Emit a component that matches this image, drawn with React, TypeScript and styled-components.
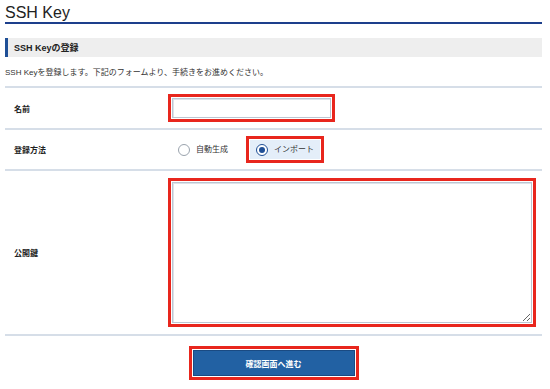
import React, { useState } from 'react';
import styled, { createGlobalStyle, css } from 'styled-components';

const GlobalStyle = createGlobalStyle`
  html, body {
    margin: 0;
    padding: 0;
    background: #ffffff;
  }
  body {
    font-family: 'Liberation Sans', 'Noto Sans CJK JP', sans-serif;
    color: #333333;
  }
`;

const Page = styled.div`
  width: 537px;
  padding: 0 8px 10px 5px;
`;

const Title = styled.h1`
  margin: 0;
  padding-top: 4px;
  font-size: 16px;
  line-height: 18px;
  font-weight: normal;
  color: #222222;
  border-bottom: 2px solid #1d3f8c;
`;

const SectionHeader = styled.h2`
  margin: 14px 0 0;
  height: 19px;
  padding-left: 6px;
  display: flex;
  align-items: center;
  background: #eeeeee;
  border-left: 3px solid #1f4f96;
  font-size: 9px;
  font-weight: bold;
  color: #222222;
`;

const Description = styled.p`
  margin: 10px 0 7px;
  font-size: 8px;
  line-height: 12px;
`;

const FormTable = styled.div`
  border-top: 2px solid #d6dee8;
`;

const Row = styled.div<{ $pad?: number }>`
  display: grid;
  grid-template-columns: 163px 1fr;
  align-items: center;
  padding: ${(p) => p.$pad ?? 6}px 6px ${(p) => p.$pad ?? 6}px 0;
  border-bottom: 2px solid #d6dee8;
`;

const Label = styled.label`
  padding-left: 9px;
  font-size: 8px;
  font-weight: bold;
  color: #222222;
`;

const Highlight = styled.div<{ $active?: boolean; $block?: boolean }>`
  display: ${(p) => (p.$block ? 'block' : 'inline-block')};
  padding: 1px;
  border: 3px solid ${(p) => (p.$active === false ? 'transparent' : '#e8261d')};
  line-height: 0;
`;

const fieldBorder = css`
  border: 1px solid #bcc6d2;
  box-shadow: inset 1px 1px 0 #dde3ea;
  background: #ffffff;
  box-sizing: border-box;
  font-family: inherit;
  outline: none;
`;

const TextInput = styled.input`
  ${fieldBorder}
  width: 159px;
  height: 20px;
  padding: 0 4px;
  font-size: 9px;
`;

const TextArea = styled.textarea`
  ${fieldBorder}
  display: block;
  width: 100%;
  height: 141px;
  padding: 4px;
  font-size: 9px;
  resize: both;
`;

const RadioGroup = styled.div`
  display: flex;
  align-items: center;
  gap: 8px;
`;

const Option = styled.div<{ $checked: boolean }>`
  display: flex;
  align-items: center;
  gap: 6px;
  height: 19px;
  padding: 0 6px;
  font-size: 8px;
  line-height: 19px;
  color: #333333;
  cursor: pointer;
  background: ${(p) => (p.$checked ? '#e4eef9' : 'transparent')};
`;

const RadioCircle = styled.span<{ $checked: boolean }>`
  position: relative;
  width: 12px;
  height: 12px;
  box-sizing: border-box;
  border-radius: 50%;
  background: #ffffff;
  border: 1px solid ${(p) => (p.$checked ? '#1f4f96' : '#9aa3ad')};

  ${(p) =>
    p.$checked &&
    css`
      &::after {
        content: '';
        position: absolute;
        left: 2px;
        top: 2px;
        width: 6px;
        height: 6px;
        border-radius: 50%;
        background: #1f4f96;
      }
    `}
`;

const Actions = styled.div`
  display: flex;
  justify-content: center;
  padding-top: 10px;
`;

const SubmitButton = styled.button`
  width: 162px;
  height: 26px;
  border: 1px solid #1a4a82;
  background: #2261a3;
  color: #ffffff;
  font-family: inherit;
  font-size: 8px;
  font-weight: bold;
  cursor: pointer;
`;

type METHOD = 'auto' | 'import';

export default function App() {
  const [method, setMethod] = useState<METHOD>('import');

  const options: { value: METHOD; label: string }[] = [
    { value: 'auto', label: '自動生成' },
    { value: 'import', label: 'インポート' },
  ];

  return (
    <>
      <GlobalStyle />
      <Page>
        <Title>SSH Key</Title>
        <SectionHeader>SSH Keyの登録</SectionHeader>
        <Description>
          SSH Keyを登録します。下記のフォームより、手続きをお進めください。
        </Description>
        <FormTable>
          <Row $pad={6}>
            <Label htmlFor="name">名前</Label>
            <div>
              <Highlight>
                <TextInput id="name" type="text" />
              </Highlight>
            </div>
          </Row>
          <Row $pad={6}>
            <Label>登録方法</Label>
            <RadioGroup>
              {options.map((o) => (
                <Highlight key={o.value} $active={o.value === 'import'}>
                  <Option $checked={method === o.value} onClick={() => setMethod(o.value)}>
                    <RadioCircle $checked={method === o.value} />
                    {o.label}
                  </Option>
                </Highlight>
              ))}
            </RadioGroup>
          </Row>
          <Row $pad={7}>
            <Label htmlFor="pubkey">公開鍵</Label>
            <Highlight $block>
              <TextArea id="pubkey" />
            </Highlight>
          </Row>
        </FormTable>
        <Actions>
          <Highlight>
            <SubmitButton type="button">確認画面へ進む</SubmitButton>
          </Highlight>
        </Actions>
      </Page>
    </>
  );
}
